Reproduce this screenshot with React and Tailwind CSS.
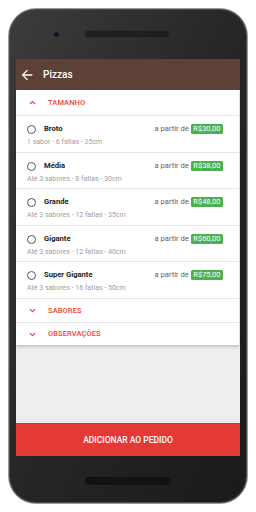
import React from "react";

const items = [
  { name: "Broto", sub: "1 sabor - 6 fatias - 25cm", price: "R$30,00", h: "h-[37px]" },
  { name: "Média", sub: "Até 3 sabores - 8 fatias - 30cm", price: "R$38,00", h: "h-[36px]" },
  { name: "Grande", sub: "Até 3 sabores - 12 fatias - 35cm", price: "R$48,00", h: "h-[37px]" },
  { name: "Gigante", sub: "Até 3 sabores - 12 fatias - 40cm", price: "R$60,00", h: "h-[36px]" },
  { name: "Super Gigante", sub: "Até 3 sabores - 16 fatias - 50cm", price: "R$75,00", h: "h-[37px]" },
];

function Chevron({ up }) {
  return (
    <svg width="7" height="5" viewBox="0 0 7 5" className="shrink-0">
      {up ? (
        <path d="M1 4 L3.5 1.5 L6 4" fill="none" stroke="#f44336" strokeWidth="1.2" />
      ) : (
        <path d="M1 1.2 L3.5 3.7 L6 1.2" fill="none" stroke="#f44336" strokeWidth="1.2" />
      )}
    </svg>
  );
}

function Header({ label, up, h }) {
  return (
    <div className={`${h} flex items-center pl-[13px] border-b border-[#e6e6e6]`}>
      <Chevron up={up} />
      <span className="ml-[12px] text-[7.5px] font-medium text-[#f44336] leading-none tracking-[0.1px]">
        {label}
      </span>
    </div>
  );
}

export default function App() {
  return (
    <div
      className="w-[256px] h-[512px] bg-white pl-[8px] pt-[8px]"
      style={{ fontFamily: "Roboto, 'Noto Sans', sans-serif" }}
    >
      <div className="w-[240px] h-[496px] rounded-[28px] border border-[#9a9a9a] overflow-hidden flex flex-col bg-linear-to-br from-[#3c3c3c] via-[#262626] to-[#1a1a1a] shadow-[inset_0_0_0_1px_#4a4a4a]">
        {/* top bezel */}
        <div className="h-[50px] shrink-0 flex items-start pt-[21px] pl-[45px]">
          <div className="w-[5px] h-[5px] mt-[1.5px] rounded-full bg-[#15152e]" />
          <div className="ml-[25px] w-[86px] h-[8px] rounded-full bg-[#1e1e1e] border border-[#2c2c2c]" />
        </div>

        {/* screen */}
        <div className="mx-[7px] h-[397px] shrink-0 flex flex-col">
          <div className="h-[31px] shrink-0 bg-[#5d4037] flex items-center">
            <svg width="16" height="16" viewBox="0 0 24 24" className="ml-[3px]">
              <path
                d="M20 11H7.83l5.59-5.59L12 4l-8 8 8 8 1.41-1.41L7.83 13H20v-2z"
                fill="#ffffff"
              />
            </svg>
            <span className="ml-[8px] text-[10px] font-medium text-white leading-none">Pizzas</span>
          </div>

          <div className="flex-1 bg-[#eeeeee] flex flex-col">
            <div className="bg-white mr-[1px] shadow-[0_2px_3px_rgba(0,0,0,0.18)]">
              <Header label="TAMANHO" up h="h-[26px]" />
              {items.map((it) => (
                <div key={it.name} className={`${it.h} border-b border-[#e6e6e6] pl-[11px] pr-[16px] pt-[8px]`}>
                  <div className="h-[10px] flex items-center">
                    <div className="w-[9px] h-[9px] rounded-full border border-[#555555] shrink-0" />
                    <span className="ml-[8px] text-[7.6px] font-bold text-[#212121] leading-none">
                      {it.name}
                    </span>
                    <span className="ml-auto text-[7.6px] text-[#616161] leading-none">a partir de</span>
                    <span className="ml-[2px] h-[10px] px-[2.5px] rounded-[1.5px] bg-[#4caf50] text-white text-[7.5px] leading-[10px]">
                      {it.price}
                    </span>
                  </div>
                  <div className="mt-[3.5px] text-[7px] leading-[9px] text-[#9e9e9e]">{it.sub}</div>
                </div>
              ))}
              <Header label="SABORES" h="h-[24px]" />
              <div className="h-[22px] flex items-center pl-[13px]">
                <Chevron />
                <span className="ml-[12px] text-[7.5px] font-medium text-[#f44336] leading-none tracking-[0.1px]">
                  OBSERVAÇÕES
                </span>
              </div>
            </div>
          </div>

          <div className="h-[33px] shrink-0 bg-[#e53935] border-t border-[#d32f2f] flex items-center justify-center">
            <span className="text-[8.5px] font-medium text-white leading-none">ADICIONAR AO PEDIDO</span>
          </div>
        </div>

        {/* bottom bezel */}
        <div className="h-[47px] shrink-0 flex justify-center pt-[21px]">
          <div className="w-[86px] h-[8px] rounded-full bg-[#121212]" />
        </div>
      </div>
    </div>
  );
}
